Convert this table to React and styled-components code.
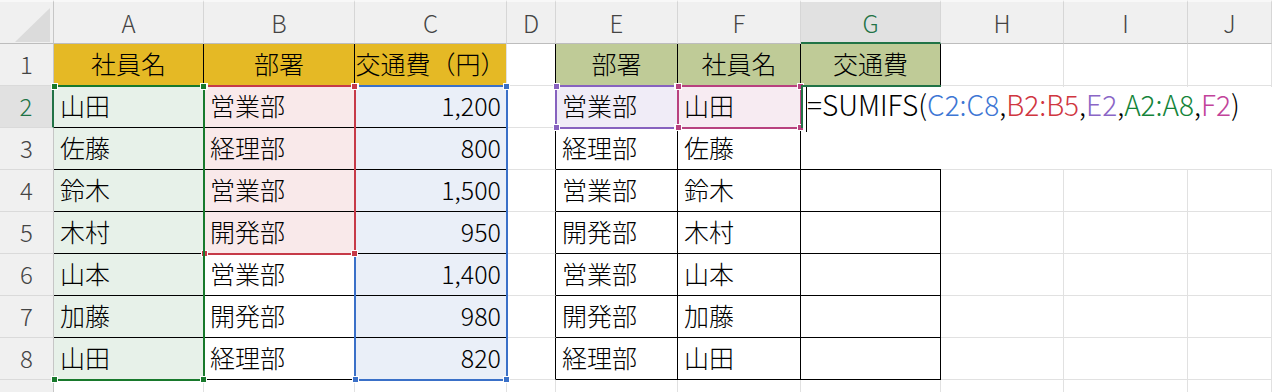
import React from 'react';
import styled, { createGlobalStyle } from 'styled-components';

const GlobalStyle = createGlobalStyle`
  html, body {
    margin: 0;
    padding: 0;
    height: 392px;
    overflow: hidden;
    background: #fff;
  }
  body {
    font-family: "Noto Sans CJK JP", "Noto Sans", sans-serif;
  }
`;

const COLS = ['A', 'B', 'C', 'D', 'E', 'F', 'G', 'H', 'I', 'J'];
const ACTIVE_COL = 'G';
const ACTIVE_ROW = 2;

const GOLD = '#e5b925';
const OLIVE = '#bfcb97';
const BLACK = '#000';

const data = {
  A: ['社員名', '山田', '佐藤', '鈴木', '木村', '山本', '加藤', '山田'],
  B: ['部署', '営業部', '経理部', '営業部', '開発部', '営業部', '開発部', '経理部'],
  C: ['交通費（円）', '1,200', '800', '1,500', '950', '1,400', '980', '820'],
  E: ['部署', '営業部', '経理部', '営業部', '開発部', '営業部', '開発部', '経理部'],
  F: ['社員名', '山田', '佐藤', '鈴木', '木村', '山本', '加藤', '山田'],
  G: ['交通費'],
};

// ranges referenced by the formula, in the order Excel paints them
const ranges = [
  { col: 'C', from: 2, to: 8, color: '#3a70c8', fill: '#eaeff8' },
  { col: 'B', from: 2, to: 5, color: '#c63a48', fill: '#f9e9ea' },
  { col: 'E', from: 2, to: 2, color: '#8762bf', fill: '#f0ecf7' },
  { col: 'A', from: 2, to: 8, color: '#18792c', fill: '#e7f1e9', noLeft: true },
  { col: 'F', from: 2, to: 2, color: '#b8417f', fill: '#f7ebf2' },
];

const gridCol = (c) => COLS.indexOf(c) + 2;

const Sheet = styled.div`
  display: grid;
  grid-template-columns: 54px 150px 151px 152px 49px 122px 123px 140px 123px 124px 1fr;
  grid-template-rows: 44px repeat(9, 42px);
  width: 1272px;
  font-family: "Noto Sans CJK JP", "Noto Sans", sans-serif;
  font-weight: 300;
`;

const Corner = styled.div`
  grid-column: 1;
  grid-row: 1;
  box-sizing: border-box;
  background: #f0f0f0;
  border-top: 2px solid #f8f8f8;
  border-right: 1px solid #c6c6c6;
  border-bottom: 1px solid #bdbdbd;
  svg {
    display: block;
  }
`;

const ColHead = styled.div`
  grid-column: ${(p) => p.$gc};
  grid-row: 1;
  box-sizing: border-box;
  display: flex;
  align-items: center;
  justify-content: center;
  background: ${(p) => (p.$active ? '#e1e1e1' : '#f0f0f0')};
  border-top: 2px solid #f8f8f8;
  border-right: 1px solid #d6d6d6;
  border-bottom: ${(p) => (p.$active ? '2px solid #217346' : '1px solid #bdbdbd')};
  color: ${(p) => (p.$active ? '#217346' : '#444')};
  font-size: 24px;
`;

const RowHead = styled.div`
  grid-column: 1;
  grid-row: ${(p) => p.$gr};
  box-sizing: border-box;
  display: flex;
  align-items: center;
  justify-content: center;
  background: ${(p) => (p.$active ? '#e1e1e1' : '#f0f0f0')};
  border-right: ${(p) => (p.$active ? '2px solid #217346' : '1px solid #c6c6c6')};
  border-bottom: 1px solid #dadada;
  color: ${(p) => (p.$active ? '#217346' : '#444')};
  font-size: 24px;
  padding-bottom: 2px;
`;

const Cell = styled.div`
  grid-column: ${(p) => p.$gc};
  grid-row: ${(p) => p.$gr};
  box-sizing: border-box;
  display: flex;
  align-items: center;
  justify-content: ${(p) =>
    p.$align === 'right' ? 'flex-end' : p.$align === 'center' ? 'center' : 'flex-start'};
  min-width: 0;
  padding: ${(p) => (p.$align === 'center' ? '0 0 4px 0' : '0 5px 4px 6px')};
  background: ${(p) => p.$bg || '#fff'};
  border-right: 1px solid ${(p) => p.$r || '#e1e1e1'};
  border-bottom: 1px solid ${(p) => p.$b || '#e1e1e1'};
  font-size: 25px;
  color: #000;
  white-space: nowrap;
`;

const Range = styled.div`
  grid-column: ${(p) => p.$gc};
  grid-row: ${(p) => p.$gr};
  position: relative;
  margin: -1px;
  border: 2px solid ${(p) => p.$color};
  ${(p) => p.$noLeft && 'border-left-color: transparent;'}
  pointer-events: none;
`;

const Handle = styled.span`
  position: absolute;
  box-sizing: border-box;
  width: 7px;
  height: 7px;
  background: ${(p) => p.$color};
  border: 1px solid #fff;
  ${(p) => p.$v}: -4px;
  ${(p) => p.$h}: -4px;
`;

const ActiveCell = styled.div`
  grid-column: 8;
  grid-row: 3;
  position: relative;
  margin-top: -1px;
  border-top: 2px solid #217346;
  border-left: 2px solid #217346;
`;

const EditBox = styled.div`
  grid-column: 8 / -1;
  grid-row: 3 / 5;
  position: relative;
  z-index: 2;
  margin: 1px 0 1px 2px;
  background: #fff;
`;

const Caret = styled.span`
  position: absolute;
  left: 3px;
  top: 0;
  width: 1px;
  height: 45px;
  background: #000;
`;

const Formula = styled.div`
  padding-left: 4px;
  font-size: 28px;
  line-height: 34px;
  color: #000;
  white-space: nowrap;
`;

const Ref = styled.span`
  color: ${(p) => p.$color};
`;

function cellStyle(col, row) {
  const s = {};
  if (row >= 1 && row <= 8) {
    if (col === 'A' || col === 'B' || col === 'C') {
      s.b = BLACK;
      if (col !== 'C') s.r = BLACK;
      if (row === 1) s.bg = GOLD;
    }
    if (col === 'D') s.r = BLACK;
    if (col === 'E' || col === 'F' || col === 'G') {
      s.b = BLACK;
      s.r = BLACK;
      if (row === 1) s.bg = OLIVE;
    }
    if (row === 1) s.align = 'center';
    if (col === 'C' && row > 1) s.align = 'right';
  }
  const range = ranges.find((r) => r.col === col && row >= r.from && row <= r.to);
  if (range) s.bg = range.fill;
  return s;
}

function RangeBox({ col, from, to, color, noLeft }) {
  return (
    <Range $gc={gridCol(col)} $gr={`${from + 1} / ${to + 2}`} $color={color} $noLeft={noLeft}>
      <Handle $color={color} $v="top" $h="left" />
      <Handle $color={color} $v="top" $h="right" />
      <Handle $color={color} $v="bottom" $h="left" />
      <Handle $color={color} $v="bottom" $h="right" />
    </Range>
  );
}

export default function App() {
  const rows = [1, 2, 3, 4, 5, 6, 7, 8, 9];

  return (
    <>
      <GlobalStyle />
      <Sheet>
        <Corner>
          <svg width="53" height="42" viewBox="0 0 53 42">
            <polygon points="15,40 50,40 50,6" fill="#dbdbdb" />
          </svg>
        </Corner>
        {COLS.map((c) => (
          <ColHead key={c} $gc={gridCol(c)} $active={c === ACTIVE_COL}>{c}</ColHead>
        ))}

        {rows.map((r) => (
          <React.Fragment key={r}>
            <RowHead $gr={r + 1} $active={r === ACTIVE_ROW}>{r}</RowHead>
            {COLS.map((c) => {
              const s = cellStyle(c, r);
              const text = data[c] ? data[c][r - 1] : '';
              return (
                <Cell
                  key={c}
                  $gc={gridCol(c)}
                  $gr={r + 1}
                  $bg={s.bg}
                  $r={s.r}
                  $b={s.b}
                  $align={s.align}
                >
                  {text}
                </Cell>
              );
            })}
          </React.Fragment>
        ))}

        {ranges.map((rg) => (
          <RangeBox key={rg.col} {...rg} />
        ))}

        <ActiveCell />
        <EditBox>
          <Caret />
          <Formula>
            =SUMIFS(
            <Ref $color="#3d76d4">C2:C8</Ref>,
            <Ref $color="#d0363f">B2:B5</Ref>,
            <Ref $color="#8a66c6">E2</Ref>,
            <Ref $color="#14843a">A2:A8</Ref>,
            <Ref $color="#c2439a">F2</Ref>)
          </Formula>
        </EditBox>
      </Sheet>
    </>
  );
}
